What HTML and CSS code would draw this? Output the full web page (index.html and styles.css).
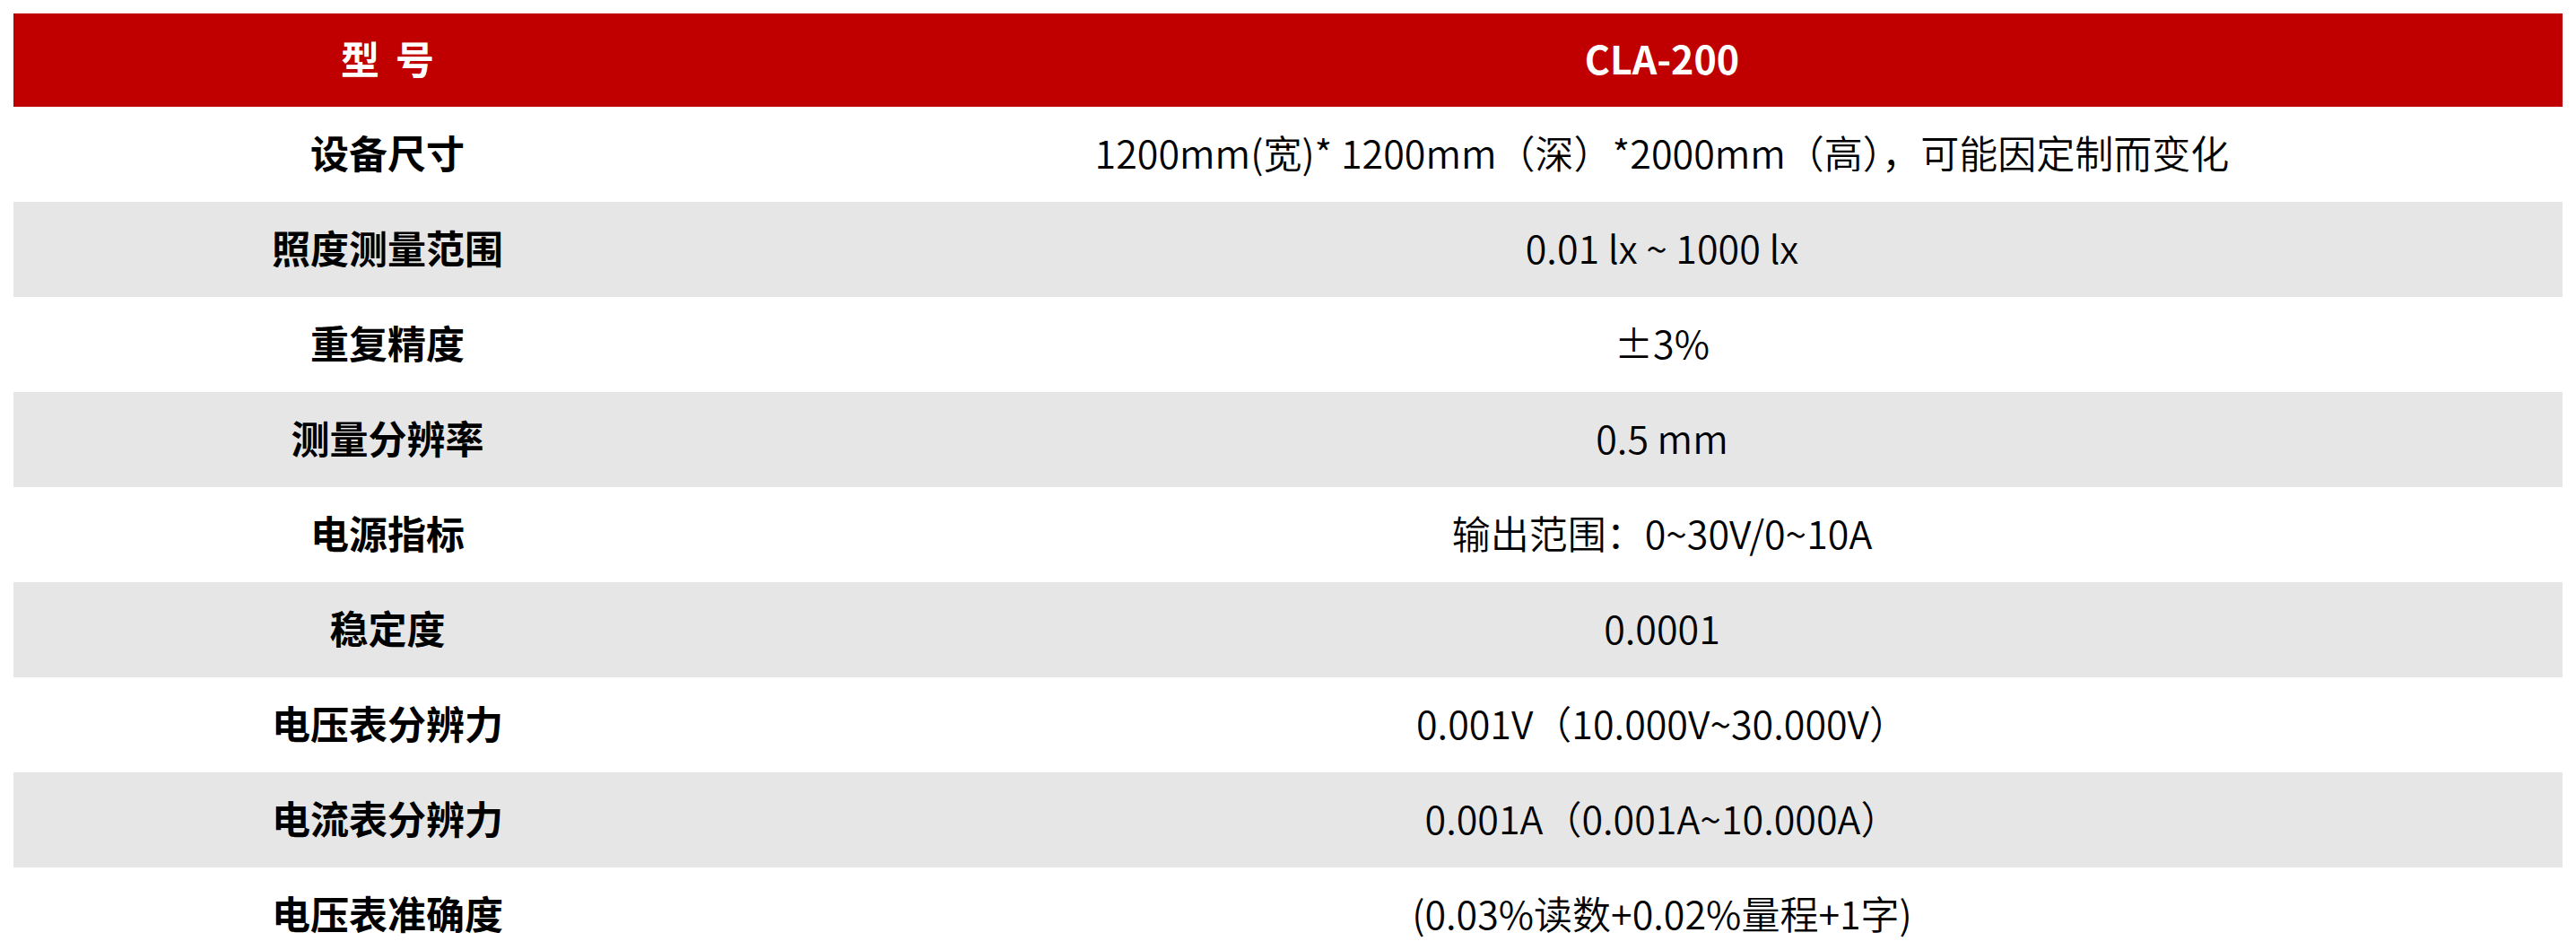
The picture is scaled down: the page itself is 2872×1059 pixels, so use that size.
FILE: index.html
```html
<!DOCTYPE html>
<html lang="zh-CN">
<head>
<meta charset="utf-8">
<title>CLA-200 参数</title>
<link rel="stylesheet" href="styles.css">
</head>
<body>
<table class="spec">
  <colgroup>
    <col class="col-name">
    <col class="col-value">
  </colgroup>
  <thead>
    <tr class="head">
      <th>型<span class="gap"></span>号</th>
      <th class="model">CLA-200</th>
    </tr>
  </thead>
  <tbody>
    <tr><td class="name">设备尺寸</td><td class="value">1200mm(宽)* 1200mm（深）*2000mm（高），可能因定制而变化</td></tr>
    <tr class="alt"><td class="name">照度测量范围</td><td class="value">0.01 lx ~ 1000 lx</td></tr>
    <tr><td class="name">重复精度</td><td class="value">±3%</td></tr>
    <tr class="alt"><td class="name">测量分辨率</td><td class="value">0.5 mm</td></tr>
    <tr><td class="name">电源指标</td><td class="value">输出范围：0~30V/0~10A</td></tr>
    <tr class="alt"><td class="name">稳定度</td><td class="value">0.0001</td></tr>
    <tr><td class="name">电压表分辨力</td><td class="value">0.001V（10.000V~30.000V）</td></tr>
    <tr class="alt"><td class="name">电流表分辨力</td><td class="value">0.001A（0.001A~10.000A）</td></tr>
    <tr><td class="name">电压表准确度</td><td class="value">(0.03%读数+0.02%量程+1字)</td></tr>
  </tbody>
</table>
</body>
</html>
```
FILE: styles.css
```css
html, body {
  background: #ffffff;
}
body {
  margin: 15px;
  font-family: "Noto Sans CJK SC", "Noto Sans", sans-serif;
  color: #000000;
}
.spec {
  width: 100%;
  border-collapse: collapse;
  border-spacing: 0;
  table-layout: fixed;
}
.col-name {
  width: 834px;
}
.spec tr {
  height: 106px;
}
.spec .head {
  height: 104px;
  background: #c00000;
  color: #ffffff;
}
.spec th,
.spec td {
  padding: 0 0 6px 0;
  text-align: center;
  vertical-align: middle;
}
.head th {
  font-size: 43px;
  font-weight: 700;
}
.gap {
  display: inline-block;
  width: 18px;
}
.spec td {
  font-size: 43px;
}
.name {
  font-weight: 700;
}
.value {
  font-size: 42.5px;
  font-weight: 350;
}
.alt {
  background: #e6e6e6;
}
```
